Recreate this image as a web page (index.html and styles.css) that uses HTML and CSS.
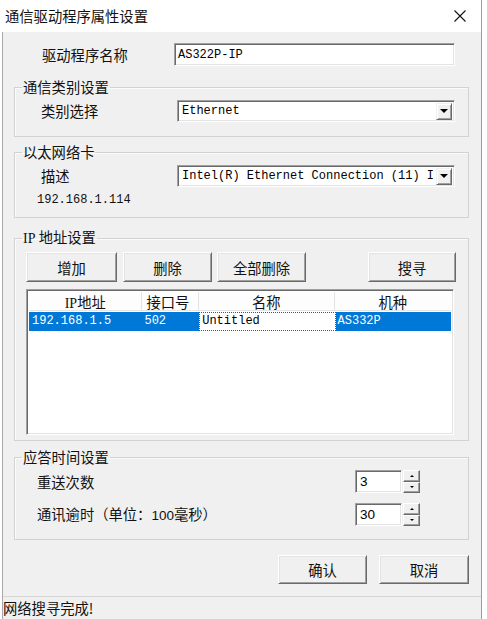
FILE: index.html
```html
<!DOCTYPE html>
<html lang="zh-CN">
<head>
<meta charset="utf-8">
<title>通信驱动程序属性设置</title>
<link rel="stylesheet" href="styles.css">
</head>
<body>
<div class="window">
  <div class="titlebar">
    <span class="title">通信驱动程序属性设置</span>
    <svg class="close" width="14" height="14" viewBox="0 0 14 14"><path d="M1.5 1.5 L12.5 12.5 M12.5 1.5 L1.5 12.5" stroke="#111" stroke-width="1.1" fill="none"/></svg>
  </div>
  <div class="client">
    <div class="name-row">
      <span class="lbl name-lbl">驱动程序名称</span>
      <div class="edit name-edit">AS322P-IP</div>
    </div>

    <fieldset class="group g1">
      <legend>通信类别设置</legend>
      <div class="combo-row">
        <span class="lbl combo-lbl">类别选择</span>
        <div class="combo"><span class="combo-text">Ethernet</span><span class="drop"><i class="tri"></i></span></div>
      </div>
    </fieldset>

    <fieldset class="group g2">
      <legend>以太网络卡</legend>
      <div class="combo-row">
        <span class="lbl combo-lbl">描述</span>
        <div class="combo"><span class="combo-text">Intel(R) Ethernet Connection (11) I</span><span class="drop"><i class="tri"></i></span></div>
      </div>
      <div class="ip-text">192.168.1.114</div>
    </fieldset>

    <fieldset class="group g3">
      <legend><span class="mono-ip">IP</span> 地址设置</legend>
      <div class="g3-body">
        <div class="btn-row">
          <button class="btn b-add">增加</button>
          <button class="btn b-del">删除</button>
          <button class="btn b-delall">全部删除</button>
          <button class="btn b-search">搜寻</button>
        </div>
        <div class="list">
          <div class="list-head">
            <div class="hc c1"><span class="mono-ip">IP</span>地址</div>
            <div class="hc c2">接口号</div>
            <div class="hc c3">名称</div>
            <div class="hc c4">机种</div>
          </div>
          <div class="list-row sel">
            <div class="rc c1">192.168.1.5</div>
            <div class="rc c2">502</div>
            <div class="rc c3 focus">Untitled</div>
            <div class="rc c4">AS332P</div>
          </div>
        </div>
      </div>
    </fieldset>

    <fieldset class="group g4">
      <legend>应答时间设置</legend>
      <div class="spin-row">
        <span class="lbl spin-lbl">重送次数</span>
        <div class="edit spin-edit">3</div>
        <div class="spin"><span class="sb"><i class="up"></i></span><span class="sb"><i class="dn"></i></span></div>
      </div>
      <div class="spin-row r2">
        <span class="lbl spin-lbl">通讯逾时（单位：<span class="num">100</span>毫秒）</span>
        <div class="edit spin-edit">30</div>
        <div class="spin"><span class="sb"><i class="up"></i></span><span class="sb"><i class="dn"></i></span></div>
      </div>
    </fieldset>

    <div class="dlg-buttons">
      <button class="btn b-ok">确认</button>
      <button class="btn b-cancel">取消</button>
    </div>

    <div class="status">网络搜寻完成!</div>
  </div>
</div>
</body>
</html>
```

FILE: styles.css
```css
* { box-sizing: border-box; }
html, body { margin: 0; padding: 0; background: #ffffff; }
body {
  width: 487px; height: 619px; overflow: hidden;
  font-family: "Noto Sans CJK SC", "Noto Sans", sans-serif;
  font-size: 14px; color: #111;
}
.window {
  width: 482px; height: 619px;
  border-right: 1px solid #9c9c9c;
  display: flex; flex-direction: column;
}
.titlebar {
  height: 32px; flex: none; background: #fff;
  display: flex; align-items: center; justify-content: space-between;
  padding: 0 14px 0 5px;
}
.title { font-size: 14.3px; line-height: 18px; color: #111; }
.close { display: block; }
.client {
  flex: 1; margin-left: 2px;
  border-left: 1px solid #a9a9a9;
  background: #f0f0f0;
  display: flex; flex-direction: column;
  padding-right: 12px;
}
.lbl { font-size: 14.3px; line-height: 18px; color: #111; white-space: nowrap; }

/* sunken edit */
.edit {
  background: #fff;
  border: 1px solid; border-color: #a0a0a0 #ffffff #ffffff #a0a0a0;
  box-shadow: inset 1px 1px 0 #696969, inset -1px -1px 0 #e3e3e3;
  font-family: "Liberation Mono", monospace; font-size: 12px; color: #000;
  display: flex; align-items: center; padding-left: 3px;
}
.name-row { display: flex; align-items: center; margin-top: 11px; padding-left: 39px; }
.name-lbl { width: 132px; }
.name-edit { width: 281px; height: 23px; }

/* groups */
.group {
  margin: 0 0 0 11px; padding: 0;
  border: 1px solid #d2d2d2;
  box-shadow: inset 1px 1px 0 #fbfbfb;
  min-width: 0;
}
.group legend {
  margin-left: 7px; padding: 0 1px;
  font-size: 14.3px; line-height: 16px; color: #111;
}
.mono-ip { font-family: "Liberation Serif", serif; font-size: 14px; }
.g1 { margin-top: 13px; padding: 5px 0 14px; }
.g2 { margin-top: 7px; padding: 5px 0 9px; }
.g3 { margin-top: 11px; padding: 5px 0 5px; }
.g3-body { padding-left: 11px; }
.g4 { margin-top: 8px; padding: 5px 0 13px; }

.combo-row { display: flex; align-items: center; padding-left: 26px; }
.combo-lbl { width: 136px; }
.combo {
  width: 278px; height: 22px;
  background: #fff;
  border: 1px solid; border-color: #a0a0a0 #ffffff #ffffff #a0a0a0;
  box-shadow: inset 1px 1px 0 #696969, inset -1px -1px 0 #e3e3e3;
  display: flex; align-items: center; justify-content: space-between;
  padding: 2px 2px 2px 4px;
  font-family: "Liberation Mono", monospace; font-size: 12px; color: #000;
}
.combo-text { white-space: nowrap; overflow: hidden; }
.drop {
  width: 16px; height: 17px; flex: none;
  background: #f0f0f0;
  border: 1px solid; border-color: #f0f0f0 #696969 #696969 #f0f0f0;
  box-shadow: inset 1px 1px 0 #ffffff, inset -1px -1px 0 #a0a0a0;
  display: flex; align-items: center; justify-content: center;
}
.tri {
  display: block; width: 0; height: 0;
  border-left: 4px solid transparent; border-right: 4px solid transparent;
  border-top: 4px solid #000;
}
.ip-text {
  margin-top: 5px; padding-left: 22px;
  font-family: "Liberation Mono", monospace; font-size: 12px; line-height: 16px; color: #111;
}

/* buttons */
.btn {
  font-family: "Noto Sans CJK SC", sans-serif; font-size: 14.3px; color: #111;
  background: #f0f0f0;
  border: 1px solid; border-color: #ffffff #696969 #696969 #ffffff;
  box-shadow: inset 1px 1px 0 #e3e3e3, inset -1px -1px 0 #a0a0a0;
  padding: 0; margin: 0;
  display: flex; align-items: center; justify-content: center;
}
.btn-row { display: flex; height: 30px; }
.b-add { width: 91px; }
.b-del { width: 89px; margin-left: 6px; }
.b-delall { width: 89px; margin-left: 5px; }
.b-search { width: 88px; margin-left: 62px; }

/* list */
.list {
  margin-top: 7px; width: 428px; height: 146px;
  background: #fff;
  border: 1px solid; border-color: #a0a0a0 #ffffff #ffffff #a0a0a0;
  box-shadow: inset 1px 1px 0 #696969, inset -1px -1px 0 #e3e3e3;
  padding: 2px;
}
.list-head { display: flex; height: 19px; border-bottom: 1px solid #e5e5e5; background: #fdfdfd; }
.hc {
  font-size: 14.3px; line-height: 19px; text-align: center;
  border-right: 1px solid #e3e3e3; color: #111;
}
.c1 { width: 114px; }
.c2 { width: 57px; }
.c3 { width: 136px; }
.c4 { width: 117px; border-right: none; }
.list-head .c2 { text-align: left; padding-left: 4px; }
.list-row { display: flex; height: 19px; margin-top: 1px; }
.rc {
  font-family: "Liberation Mono", monospace; font-size: 12px; line-height: 19px;
  padding-left: 3px; white-space: nowrap; overflow: hidden;
}
.sel .rc { background: #0078d7; color: #fff; }
.sel .rc.c2 { padding-left: 2px; }
.sel .rc.focus {
  background: #fff; color: #000;
  outline: 1px dotted #555; outline-offset: -1px;
  width: 137px;
}
.sel .rc.c4 { width: 116px; padding-left: 2px; }

/* spin rows */
.spin-row { display: flex; align-items: center; padding-left: 22px; height: 23px; }
.spin-row.r2 { margin-top: 10px; }
.spin-lbl { width: 318px; }
.num { font-family: "Liberation Sans", sans-serif; font-size: 13.5px; }
.spin-edit {
  width: 47px; height: 23px;
  font-family: "Liberation Sans", sans-serif; font-size: 13.5px;
  padding-left: 4px;
}
.spin { width: 17px; height: 23px; margin-left: 1px; display: flex; flex-direction: column; }
.sb {
  flex: 1; background: #f0f0f0;
  border: 1px solid; border-color: #ffffff #696969 #696969 #ffffff;
  box-shadow: inset -1px -1px 0 #a0a0a0;
  display: flex; align-items: center; justify-content: center;
}
.up, .dn { display: block; width: 0; height: 0; border-left: 2px solid transparent; border-right: 2px solid transparent; }
.up { border-bottom: 2px solid #000; }
.dn { border-top: 2px solid #000; }

.dlg-buttons { display: flex; justify-content: flex-end; margin-top: 15px; height: 29px; }
.b-ok { width: 89px; }
.b-cancel { width: 90px; margin-left: 12px; }

.status {
  margin-top: auto; margin-right: -12px;
  height: 23px; border-top: 1px solid #d5d5d5;
  font-size: 14.3px; line-height: 22px; padding-left: 0; color: #111;
}
```
